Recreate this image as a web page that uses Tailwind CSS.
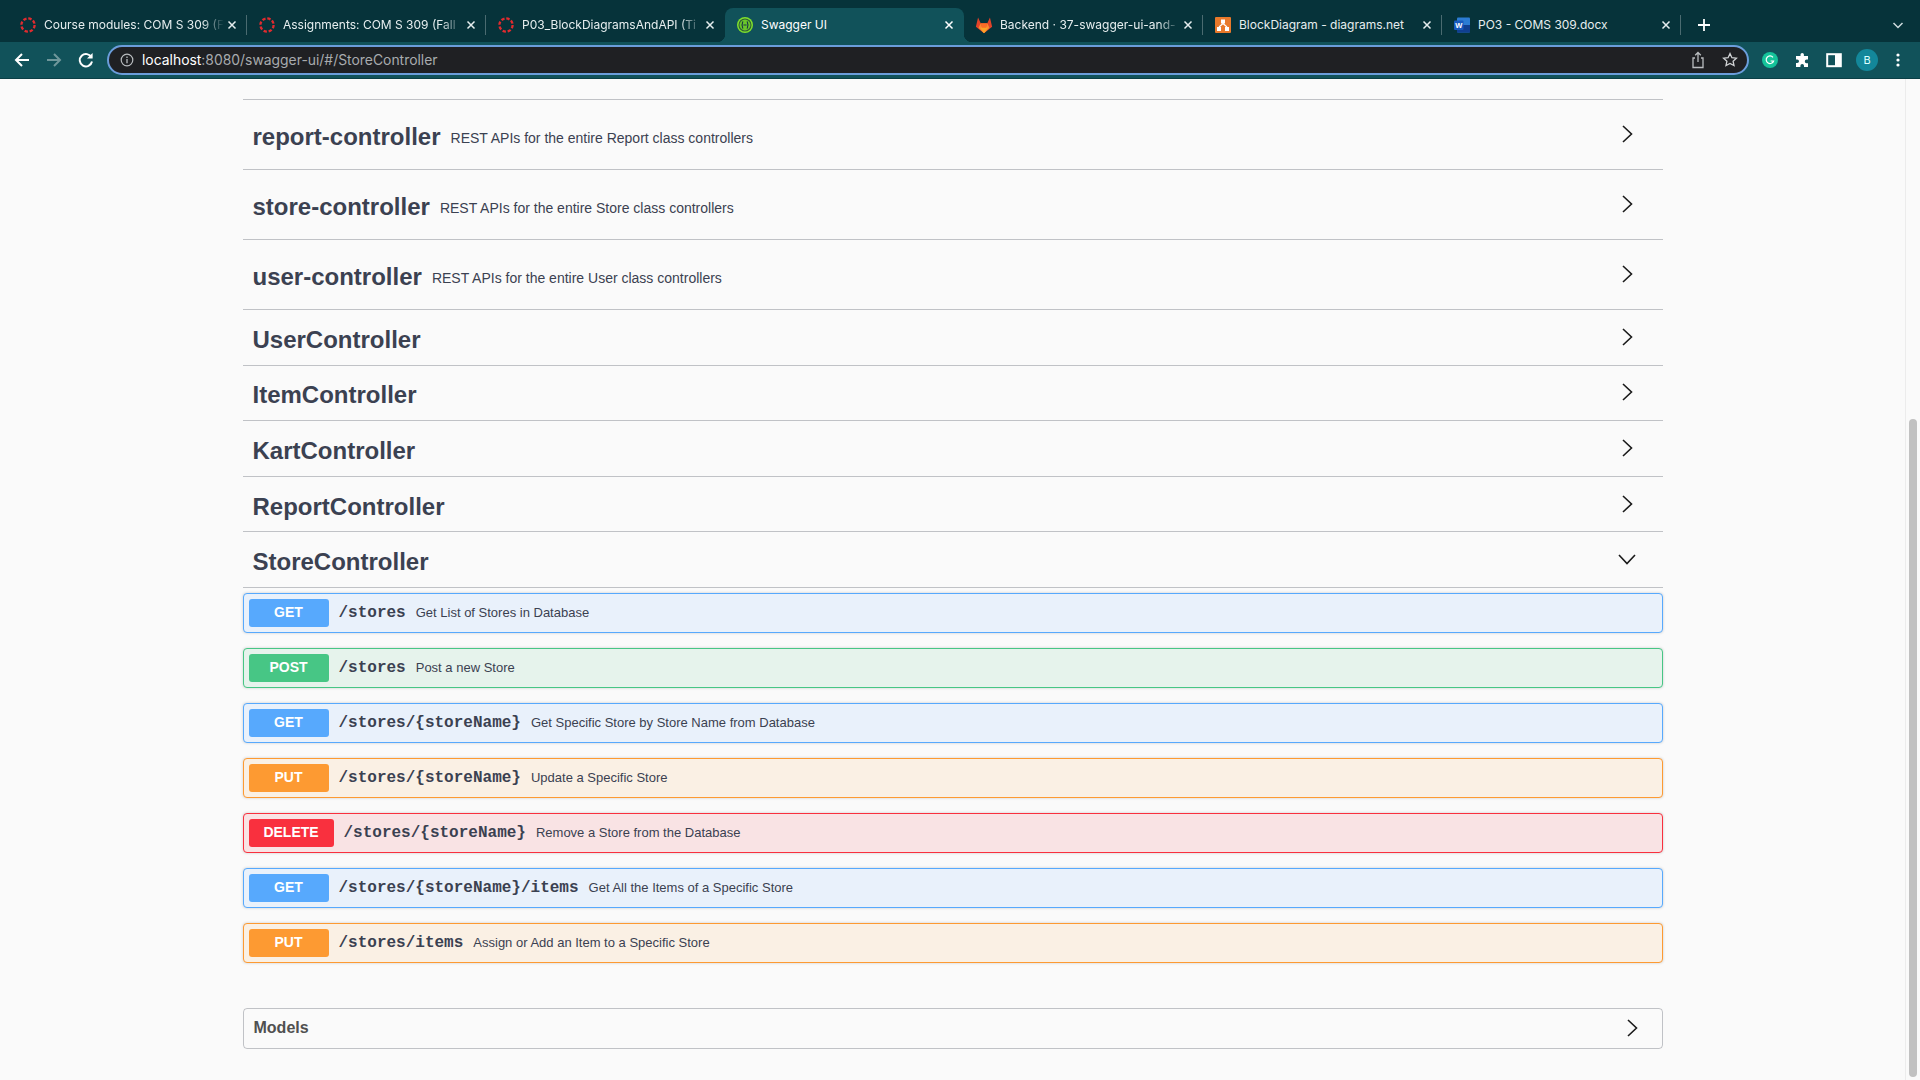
<!DOCTYPE html>
<html lang="en">
<head>
    <meta charset="UTF-8">
    <meta name="viewport" content="width=device-width, initial-scale=1.0">
    <title>Swagger UI</title>
    <script src="https://cdn.jsdelivr.net/npm/@tailwindcss/browser@4"></script>
</head>
<body class="h-screen overflow-hidden bg-[#fafafa] font-['Liberation_Sans',sans-serif] flex flex-col">

    <!-- Tab strip -->
    <div class="h-[42px] shrink-0 bg-[#06333a] flex items-end pl-2 font-['Inter',sans-serif] text-[12px] text-[#e6eeef]">
        <div class="w-[239px] h-[34px] flex items-center pl-3 pr-2 relative">
            <svg class="w-4 h-4 shrink-0" viewBox="0 0 16 16"><circle cx="8" cy="8" r="6.6" fill="none" stroke="#e02b2f" stroke-width="2.3" stroke-dasharray="3.4 1.8"/></svg>
            <span class="ml-2 w-[180px] whitespace-nowrap overflow-hidden [mask-image:linear-gradient(to_right,black_88%,transparent)]">Course modules: COM S 309 (F</span>
            <svg class="w-3 h-3 ml-[2px] shrink-0" viewBox="0 0 12 12"><path d="M2.5 2.5l7 7M9.5 2.5l-7 7" stroke="#e6eeef" stroke-width="1.5"/></svg>
            <span class="absolute right-0 top-[7px] h-[20px] w-px bg-[#4a6b70]"></span>
        </div>
        <div class="w-[239px] h-[34px] flex items-center pl-3 pr-2 relative">
            <svg class="w-4 h-4 shrink-0" viewBox="0 0 16 16"><circle cx="8" cy="8" r="6.6" fill="none" stroke="#e02b2f" stroke-width="2.3" stroke-dasharray="3.4 1.8"/></svg>
            <span class="ml-2 w-[180px] whitespace-nowrap overflow-hidden [mask-image:linear-gradient(to_right,black_88%,transparent)]">Assignments: COM S 309 (Fall</span>
            <svg class="w-3 h-3 ml-[2px] shrink-0" viewBox="0 0 12 12"><path d="M2.5 2.5l7 7M9.5 2.5l-7 7" stroke="#e6eeef" stroke-width="1.5"/></svg>
            <span class="absolute right-0 top-[7px] h-[20px] w-px bg-[#4a6b70]"></span>
        </div>
        <div class="w-[239px] h-[34px] flex items-center pl-3 pr-2">
            <svg class="w-4 h-4 shrink-0" viewBox="0 0 16 16"><circle cx="8" cy="8" r="6.6" fill="none" stroke="#e02b2f" stroke-width="2.3" stroke-dasharray="3.4 1.8"/></svg>
            <span class="ml-2 w-[180px] whitespace-nowrap overflow-hidden [mask-image:linear-gradient(to_right,black_88%,transparent)]">P03_BlockDiagramsAndAPI (Ti</span>
            <svg class="w-3 h-3 ml-[2px] shrink-0" viewBox="0 0 12 12"><path d="M2.5 2.5l7 7M9.5 2.5l-7 7" stroke="#e6eeef" stroke-width="1.5"/></svg>
        </div>
        <!-- Active tab -->
        <div class="w-[239px] h-[34px] flex items-center pl-3 pr-2 relative bg-[#11525a] rounded-t-lg text-white">
            <span class="absolute bottom-0 -left-2 w-2 h-2 bg-[radial-gradient(circle_at_0_0,#06333a_8px,#11525a_8.5px)]"></span>
            <span class="absolute bottom-0 -right-2 w-2 h-2 bg-[radial-gradient(circle_at_100%_0,#06333a_8px,#11525a_8.5px)]"></span>
            <svg class="w-4 h-4 shrink-0" viewBox="0 0 16 16"><circle cx="8" cy="8" r="8" fill="#7fe02c"/><circle cx="8" cy="8" r="6" fill="#6ac62a" stroke="#2f5f35" stroke-width="1.1"/><path d="M6.2 4.6c-1 .2-.7 1.8-.9 2.6-.1.4-.4.8-.8.8.4 0 .7.4.8.8.2.8-.1 2.4.9 2.6M9.8 4.6c1 .2.7 1.8.9 2.6.1.4.4.8.8.8-.4 0-.7.4-.8.8-.2.8.1 2.4-.9 2.6M6.4 8h3.2" fill="none" stroke="#173647" stroke-width="1.1"/></svg>
            <span class="ml-2 w-[180px] whitespace-nowrap overflow-hidden">Swagger UI</span>
            <svg class="w-3 h-3 ml-[2px] shrink-0" viewBox="0 0 12 12"><path d="M2.5 2.5l7 7M9.5 2.5l-7 7" stroke="#fff" stroke-width="1.5"/></svg>
        </div>
        <div class="w-[239px] h-[34px] flex items-center pl-3 pr-2 relative">
            <svg class="w-4 h-4 shrink-0 scale-110" viewBox="0 0 16 16"><path d="M8 15.5L0.6 9.5 2.6 1.2 5 6.5h6l2.4-5.3 2 8.3z" fill="#e24329"/><path d="M8 15.5L5 6.5h6z" fill="#fc6d26"/><path d="M8 15.5L3 10.5 5 6.5zM8 15.5l5-5L11 6.5z" fill="#f9872f"/><path d="M8 15.5L4.5 10.5h7z" fill="#fca326"/></svg>
            <span class="ml-2 w-[180px] whitespace-nowrap overflow-hidden [mask-image:linear-gradient(to_right,black_88%,transparent)]">Backend · 37-swagger-ui-and-</span>
            <svg class="w-3 h-3 ml-[2px] shrink-0" viewBox="0 0 12 12"><path d="M2.5 2.5l7 7M9.5 2.5l-7 7" stroke="#e6eeef" stroke-width="1.5"/></svg>
            <span class="absolute right-0 top-[7px] h-[20px] w-px bg-[#4a6b70]"></span>
        </div>
        <div class="w-[239px] h-[34px] flex items-center pl-3 pr-2 relative">
            <svg class="w-4 h-4 shrink-0" viewBox="0 0 16 16"><rect width="16" height="16" rx="1" fill="#e8792b"/><path d="M6 2.5h4v4H6zM2 10h4v4H2zM10 10h4v4h-4z" fill="#fff"/><path d="M8 6.5L4 10M8 6.5l4 3.5" stroke="#fff" stroke-width="1.2"/></svg>
            <span class="ml-2 w-[180px] whitespace-nowrap overflow-hidden">BlockDiagram - diagrams.net</span>
            <svg class="w-3 h-3 ml-[2px] shrink-0" viewBox="0 0 12 12"><path d="M2.5 2.5l7 7M9.5 2.5l-7 7" stroke="#e6eeef" stroke-width="1.5"/></svg>
            <span class="absolute right-0 top-[7px] h-[20px] w-px bg-[#4a6b70]"></span>
        </div>
        <div class="w-[239px] h-[34px] flex items-center pl-3 pr-2 relative">
            <svg class="w-4 h-4 shrink-0" viewBox="0 0 16 16"><rect x="3" y="0.5" width="13" height="15" rx="1" fill="#2b7cd3"/><rect x="3" y="8" width="13" height="7.5" fill="#103f91"/><rect x="0" y="3.5" width="9.5" height="9.5" rx="1" fill="#185abd"/><text x="4.7" y="11" font-size="7.5" font-weight="700" fill="#fff" text-anchor="middle" font-family="Liberation Sans">W</text></svg>
            <span class="ml-2 w-[180px] whitespace-nowrap overflow-hidden">PO3 - COMS 309.docx</span>
            <svg class="w-3 h-3 ml-[2px] shrink-0" viewBox="0 0 12 12"><path d="M2.5 2.5l7 7M9.5 2.5l-7 7" stroke="#e6eeef" stroke-width="1.5"/></svg>
            <span class="absolute right-0 top-[7px] h-[20px] w-px bg-[#4a6b70]"></span>
        </div>
        <div class="h-[34px] flex items-center ml-4">
            <svg class="w-[14px] h-[14px]" viewBox="0 0 14 14"><path d="M7 1v12M1 7h12" stroke="#fff" stroke-width="1.8"/></svg>
        </div>
        <div class="h-[34px] flex items-center ml-auto mr-4">
            <svg class="w-3 h-3" viewBox="0 0 12 12"><path d="M1.5 4l4.5 4.5L10.5 4" fill="none" stroke="#cfdcde" stroke-width="1.5"/></svg>
        </div>
    </div>

    <!-- Toolbar -->
    <div class="h-[37px] shrink-0 bg-[#11525a] border-b border-[#0b3f46] flex items-start pt-[3px] text-white">
        <div class="w-[107px] h-[30px] shrink-0 flex items-center pl-[13px] gap-[14px]">
            <svg class="w-[18px] h-[18px]" viewBox="0 0 18 18"><path d="M16 9H3M9 3L3 9l6 6" fill="none" stroke="#fff" stroke-width="2"/></svg>
            <svg class="w-[18px] h-[18px]" viewBox="0 0 18 18"><path d="M2 9h13M9 3l6 6-6 6" fill="none" stroke="#6f979b" stroke-width="2"/></svg>
            <svg class="w-[18px] h-[18px]" viewBox="0 0 18 18"><path d="M14.5 6.5A6.2 6.2 0 1 0 15 10.5" fill="none" stroke="#fff" stroke-width="2"/><path d="M15.6 2v5.6H10z" fill="#fff"/></svg>
        </div>
        <div class="w-[1642px] h-[30px] shrink-0 rounded-full border-2 border-[#6b9ddb] bg-[#1f2023] flex items-center pl-[11px] pr-[9px]">
            <svg class="w-[14px] h-[14px] shrink-0" viewBox="0 0 14 14"><circle cx="7" cy="7" r="5.8" fill="none" stroke="#b9bcbf" stroke-width="1.2"/><path d="M7 6v4.2M7 3.6v1.3" stroke="#b9bcbf" stroke-width="1.3"/></svg>
            <span class="ml-[8px] font-['Inter',sans-serif] text-[13.9px] text-[#a8abae]"><span class="text-white">localhost</span>:8080/swagger-ui/#/StoreController</span>
            <svg class="w-4 h-[18px] ml-auto" viewBox="0 0 16 18"><path d="M5 7H3v9.5h10V7h-2M8 11V1.5M5.2 4.2L8 1.5l2.8 2.7" fill="none" stroke="#b9bcbf" stroke-width="1.3"/></svg>
            <svg class="w-4 h-4 ml-4" viewBox="0 0 16 16"><path d="M8 1.6l1.9 4.1 4.5.5-3.3 3 .9 4.4L8 11.4l-4 2.2.9-4.4-3.3-3 4.5-.5z" fill="none" stroke="#d0d2d4" stroke-width="1.3"/></svg>
        </div>
        <div class="h-[30px] flex items-center pl-[13px] gap-[14px]">
            <svg class="w-4 h-4" viewBox="0 0 16 16"><circle cx="8" cy="8" r="8" fill="#15c39a"/><path d="M11 5.4A3.8 3.8 0 1 0 11.6 9H8.6" fill="none" stroke="#fff" stroke-width="1.2"/></svg>
            <svg class="w-4 h-4 ml-[2px]" viewBox="0 0 16 16"><path d="M6.5 2.6a1.7 1.7 0 0 1 3.4 0V4H14v3.6h-1.4a1.8 1.8 0 0 0 0 3.6H14V15H10v-1.3a1.8 1.8 0 0 0-3.6 0V15H2v-4h1.2a1.8 1.8 0 0 0 0-3.6H2V4h4.5z" fill="#fff"/></svg>
            <svg class="w-4 h-4 ml-[2px]" viewBox="0 0 16 16"><rect x="1.2" y="2.2" width="13.6" height="12" fill="none" stroke="#fff" stroke-width="2"/><rect x="9" y="2" width="6" height="12" fill="#fff"/></svg>
            <div class="w-[22px] h-[22px] rounded-full bg-[#13879a] flex items-center justify-center text-[11px] text-[#dff] font-['Inter',sans-serif]">B</div>
            <svg class="w-1 h-4 ml-[4px]" viewBox="0 0 4 16"><circle cx="2" cy="3" r="1.6" fill="#fff"/><circle cx="2" cy="8" r="1.6" fill="#fff"/><circle cx="2" cy="13" r="1.6" fill="#fff"/></svg>
        </div>
    </div>

    <!-- Page + scrollbar -->
    <div class="flex-1 min-h-0 flex overflow-hidden">
        <main class="flex-1 min-w-0 pt-[20px] overflow-hidden">
            <div class="w-[1420px] mx-auto text-[#3b4151]">

                <div class="border-t border-[#3b4151]/30 mb-[5px]"></div>

                <div class="h-[65px] mb-[5px] border-b border-[#3b4151]/30 flex items-center pl-[10px] pr-[26px]">
                    <span class="text-[24px] font-bold">report-controller</span>
                    <span class="ml-[10px] text-[14px] mt-[2px]">REST APIs for the entire Report class controllers</span>
                    <svg class="w-5 h-5 ml-auto -mt-[6px]" viewBox="0 0 20 20"><path d="M6 2l8.5 8L6 18" fill="none" stroke="#1a1a1a" stroke-width="1.6"/></svg>
                </div>
                <div class="h-[65px] mb-[5px] border-b border-[#3b4151]/30 flex items-center pl-[10px] pr-[26px]">
                    <span class="text-[24px] font-bold">store-controller</span>
                    <span class="ml-[10px] text-[14px] mt-[2px]">REST APIs for the entire Store class controllers</span>
                    <svg class="w-5 h-5 ml-auto -mt-[6px]" viewBox="0 0 20 20"><path d="M6 2l8.5 8L6 18" fill="none" stroke="#1a1a1a" stroke-width="1.6"/></svg>
                </div>
                <div class="h-[65px] mb-[5px] border-b border-[#3b4151]/30 flex items-center pl-[10px] pr-[26px]">
                    <span class="text-[24px] font-bold">user-controller</span>
                    <span class="ml-[10px] text-[14px] mt-[2px]">REST APIs for the entire User class controllers</span>
                    <svg class="w-5 h-5 ml-auto -mt-[6px]" viewBox="0 0 20 20"><path d="M6 2l8.5 8L6 18" fill="none" stroke="#1a1a1a" stroke-width="1.6"/></svg>
                </div>
                <div class="h-[50.6px] mb-[5px] border-b border-[#3b4151]/30 flex items-center pl-[10px] pr-[26px]">
                    <span class="text-[24px] font-bold">UserController</span>
                    <svg class="w-5 h-5 ml-auto -mt-[6px]" viewBox="0 0 20 20"><path d="M6 2l8.5 8L6 18" fill="none" stroke="#1a1a1a" stroke-width="1.6"/></svg>
                </div>
                <div class="h-[50.6px] mb-[5px] border-b border-[#3b4151]/30 flex items-center pl-[10px] pr-[26px]">
                    <span class="text-[24px] font-bold">ItemController</span>
                    <svg class="w-5 h-5 ml-auto -mt-[6px]" viewBox="0 0 20 20"><path d="M6 2l8.5 8L6 18" fill="none" stroke="#1a1a1a" stroke-width="1.6"/></svg>
                </div>
                <div class="h-[50.6px] mb-[5px] border-b border-[#3b4151]/30 flex items-center pl-[10px] pr-[26px]">
                    <span class="text-[24px] font-bold">KartController</span>
                    <svg class="w-5 h-5 ml-auto -mt-[6px]" viewBox="0 0 20 20"><path d="M6 2l8.5 8L6 18" fill="none" stroke="#1a1a1a" stroke-width="1.6"/></svg>
                </div>
                <div class="h-[50.6px] mb-[5px] border-b border-[#3b4151]/30 flex items-center pl-[10px] pr-[26px]">
                    <span class="text-[24px] font-bold">ReportController</span>
                    <svg class="w-5 h-5 ml-auto -mt-[6px]" viewBox="0 0 20 20"><path d="M6 2l8.5 8L6 18" fill="none" stroke="#1a1a1a" stroke-width="1.6"/></svg>
                </div>
                <div class="h-[50.6px] mb-[5px] border-b border-[#3b4151]/30 flex items-center pl-[10px] pr-[26px]">
                    <span class="text-[24px] font-bold">StoreController</span>
                    <svg class="w-5 h-5 ml-auto -mt-[6px]" viewBox="0 0 20 20"><path d="M2 6l8 8.5L18 6" fill="none" stroke="#1a1a1a" stroke-width="1.6"/></svg>
                </div>

                <!-- Operations -->
                <div class="flex flex-col gap-[15px]">
                    <div class="h-[40px] flex items-center px-[5px] rounded border border-[#57a9fd] bg-[#e9f1fb] shadow-[0_0_3px_rgba(0,0,0,0.19)]">
                        <span class="w-[80px] h-[28px] rounded-[3px] bg-[#57a9fd] text-white text-[14px] font-bold flex items-center justify-center">GET</span>
                        <span class="ml-[10px] font-['Liberation_Mono',monospace] text-[16px] font-bold">/stores</span>
                        <span class="ml-[10px] text-[13px]">Get List of Stores in Database</span>
                    </div>
                    <div class="h-[40px] flex items-center px-[5px] rounded border border-[#47c685] bg-[#e6f3ec] shadow-[0_0_3px_rgba(0,0,0,0.19)]">
                        <span class="w-[80px] h-[28px] rounded-[3px] bg-[#47c685] text-white text-[14px] font-bold flex items-center justify-center">POST</span>
                        <span class="ml-[10px] font-['Liberation_Mono',monospace] text-[16px] font-bold">/stores</span>
                        <span class="ml-[10px] text-[13px]">Post a new Store</span>
                    </div>
                    <div class="h-[40px] flex items-center px-[5px] rounded border border-[#57a9fd] bg-[#e9f1fb] shadow-[0_0_3px_rgba(0,0,0,0.19)]">
                        <span class="w-[80px] h-[28px] rounded-[3px] bg-[#57a9fd] text-white text-[14px] font-bold flex items-center justify-center">GET</span>
                        <span class="ml-[10px] font-['Liberation_Mono',monospace] text-[16px] font-bold">/stores/{storeName}</span>
                        <span class="ml-[10px] text-[13px]">Get Specific Store by Store Name from Database</span>
                    </div>
                    <div class="h-[40px] flex items-center px-[5px] rounded border border-[#fd9a32] bg-[#faf0e4] shadow-[0_0_3px_rgba(0,0,0,0.19)]">
                        <span class="w-[80px] h-[28px] rounded-[3px] bg-[#fd9a32] text-white text-[14px] font-bold flex items-center justify-center">PUT</span>
                        <span class="ml-[10px] font-['Liberation_Mono',monospace] text-[16px] font-bold">/stores/{storeName}</span>
                        <span class="ml-[10px] text-[13px]">Update a Specific Store</span>
                    </div>
                    <div class="h-[40px] flex items-center px-[5px] rounded border border-[#f9303e] bg-[#f9e3e4] shadow-[0_0_3px_rgba(0,0,0,0.19)]">
                        <span class="w-[85px] h-[28px] rounded-[3px] bg-[#f9303e] text-white text-[14px] font-bold flex items-center justify-center">DELETE</span>
                        <span class="ml-[10px] font-['Liberation_Mono',monospace] text-[16px] font-bold">/stores/{storeName}</span>
                        <span class="ml-[10px] text-[13px]">Remove a Store from the Database</span>
                    </div>
                    <div class="h-[40px] flex items-center px-[5px] rounded border border-[#57a9fd] bg-[#e9f1fb] shadow-[0_0_3px_rgba(0,0,0,0.19)]">
                        <span class="w-[80px] h-[28px] rounded-[3px] bg-[#57a9fd] text-white text-[14px] font-bold flex items-center justify-center">GET</span>
                        <span class="ml-[10px] font-['Liberation_Mono',monospace] text-[16px] font-bold">/stores/{storeName}/items</span>
                        <span class="ml-[10px] text-[13px]">Get All the Items of a Specific Store</span>
                    </div>
                    <div class="h-[40px] flex items-center px-[5px] rounded border border-[#fd9a32] bg-[#faf0e4] shadow-[0_0_3px_rgba(0,0,0,0.19)]">
                        <span class="w-[80px] h-[28px] rounded-[3px] bg-[#fd9a32] text-white text-[14px] font-bold flex items-center justify-center">PUT</span>
                        <span class="ml-[10px] font-['Liberation_Mono',monospace] text-[16px] font-bold">/stores/items</span>
                        <span class="ml-[10px] text-[13px]">Assign or Add an Item to a Specific Store</span>
                    </div>
                </div>

                <!-- Models -->
                <div class="mt-[45px] h-[41px] rounded border border-[#3b4151]/30 flex items-center pl-[10px] pr-[20px]">
                    <span class="text-[16px] font-bold text-[#505050]">Models</span>
                    <svg class="w-5 h-5 ml-auto" viewBox="0 0 20 20"><path d="M6 2l8.5 8L6 18" fill="none" stroke="#1a1a1a" stroke-width="1.6"/></svg>
                </div>
            </div>
        </main>

        <!-- Scrollbar -->
        <div class="w-[15px] shrink-0 border-l border-[#ececec] bg-[#fafafa] pl-[3px] pr-[3px] pt-[340px] pb-[3px]">
            <div class="h-full rounded-full bg-[#c1c1c1]"></div>
        </div>
    </div>

</body>
</html>
